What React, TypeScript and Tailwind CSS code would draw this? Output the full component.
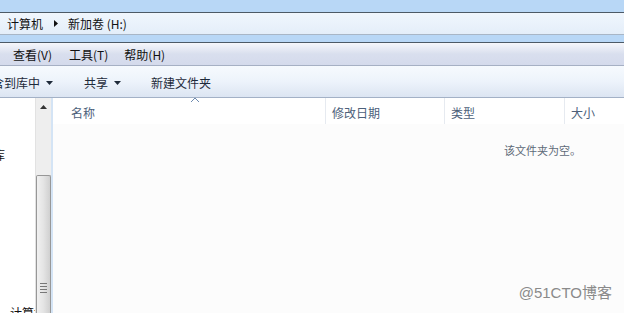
import React from 'react';

const font = { fontFamily: '"Noto Sans CJK SC", "Noto Sans", sans-serif' };

const Caret = () => (
  <svg width="7" height="4" viewBox="0 0 7 4" className="ml-[6px]">
    <path d="M0 0h7L3.5 4z" fill="#1e2a3a" />
  </svg>
);

const Header = ({ label, w, last }: { label: string; w: string; last?: boolean }) => (
  <div className={`${w} h-full flex items-center pl-[6px] pt-[3px] ${last ? '' : 'border-r border-[#e6eaf0]'}`}>
    <span className="text-[12px] text-[#4c607a]">{label}</span>
  </div>
);

export default function App() {
  return (
    <div className="w-[624px] h-[313px] overflow-hidden flex flex-col bg-[#fcfcfc] select-none" style={font}>
      {/* glass band */}
      <div className="h-[13px] bg-[#b8d7f6] border-b border-[#4d5a66] shrink-0" />

      {/* address bar */}
      <div className="h-[22px] shrink-0 bg-gradient-to-b from-[#f0f6fd] to-[#e4eef9] border-b border-[#a8b6c6] flex items-center text-[12px] text-[#111]">
        <span className="ml-[7px]">计算机</span>
        <svg width="4" height="7" viewBox="0 0 4 7" className="ml-[11px]">
          <path d="M0 0l4 3.5L0 7z" fill="#111" />
        </svg>
        <span className="ml-[10px]">新加卷 (H:)</span>
      </div>

      {/* glass band 2 */}
      <div className="h-[8px] shrink-0 bg-[#b8d7f6] border-b border-[#4d5a66]" />

      {/* menu bar */}
      <div className="h-[23px] shrink-0 pt-[2px] bg-gradient-to-b from-[#f6f7fb] via-[#d9dfee] to-[#d4daec] border-b border-[#a6b0c4] flex items-center text-[12px] text-[#111]">
        <span className="ml-[13px]">查看(V)</span>
        <span className="ml-[17px]">工具(T)</span>
        <span className="ml-[16px]">帮助(H)</span>
      </div>

      {/* toolbar */}
      <div className="h-[32px] shrink-0 pt-[2px] bg-gradient-to-b from-[#f6fafe] via-[#edf3fb] to-[#dce5f2] border-b border-[#a3b1c6] flex items-center text-[12px] text-[#1e2a3a]">
        <div className="flex items-center -ml-[8px] whitespace-nowrap">
          <span>含到库中</span>
          <Caret />
        </div>
        <div className="flex items-center ml-[31px]">
          <span>共享</span>
          <Caret />
        </div>
        <span className="ml-[30px]">新建文件夹</span>
      </div>

      {/* content */}
      <div className="flex-1 flex min-h-0">
        {/* nav pane */}
        <div className="w-[35px] shrink-0 bg-white relative overflow-hidden text-[12px] text-[#111]">
          <div className="flex flex-col h-full">
            <span className="mt-[48px] -ml-[7px] whitespace-nowrap">库</span>
            <span className="mt-auto -mb-[9px] ml-[10px] whitespace-nowrap">计算机</span>
          </div>
        </div>
        {/* scrollbar */}
        <div className="w-[16px] shrink-0 bg-[#eeeeee] border-l border-[#e2e2e2] flex flex-col">
          <div className="h-[17px] flex items-center justify-center">
            <svg width="7" height="4" viewBox="0 0 7 4">
              <path d="M3.5 0L7 4H0z" fill="#333" />
            </svg>
          </div>
          <div className="h-[60px]" />
          <div className="flex-1 rounded-t-[2px] border border-b-0 border-[#979797] bg-gradient-to-r from-[#f1f1f1] via-[#e4e4e4] to-[#d0d0d0] flex flex-col items-center">
            <div className="mt-[107px] flex flex-col gap-[2px]">
              <div className="w-[7px] h-[1px] bg-[#777]" />
              <div className="w-[7px] h-[1px] bg-[#777]" />
              <div className="w-[7px] h-[1px] bg-[#777]" />
              <div className="w-[7px] h-[1px] bg-[#777]" />
            </div>
          </div>
        </div>
        {/* splitter */}
        <div className="w-[2px] shrink-0 bg-[#d4e4f5]" />

        {/* file list */}
        <div className="flex-1 relative bg-[#fcfcfc] flex flex-col">
          <div className="h-[26px] flex bg-white relative">
            <div className="w-[12px]" />
            <Header label="名称" w="w-[261px]" />
            <Header label="修改日期" w="w-[119px]" />
            <Header label="类型" w="w-[120px]" />
            <Header label="大小" w="flex-1" last />
            <svg width="8" height="4" viewBox="0 0 8 4" className="absolute left-[138px] top-0">
              <path d="M0 4L4 0l4 4" fill="none" stroke="#6e8bb0" strokeWidth="1" />
            </svg>
          </div>
          <div className="flex justify-end pr-[43px] mt-[18px]">
            <span className="text-[11px] text-[#5e6a78]">该文件夹为空。</span>
          </div>
          <span className="absolute right-[12px] bottom-[9px] text-[15px] text-[#8a8a8a]" style={{ fontFamily: '"Liberation Sans", "Noto Sans CJK SC", sans-serif' }}>
            @51CTO博客
          </span>
        </div>
      </div>
    </div>
  );
}
